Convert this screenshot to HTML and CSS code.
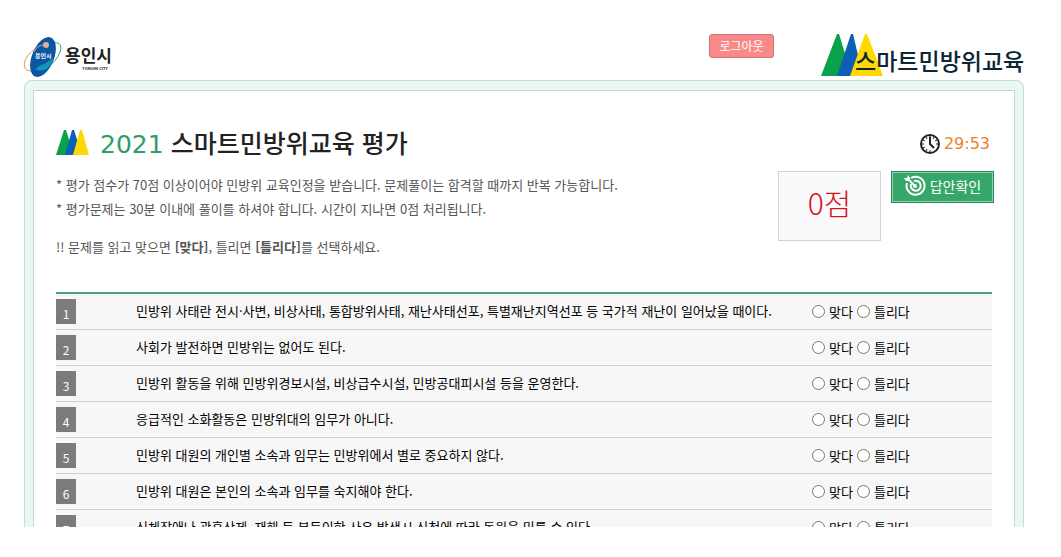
FILE: index.html
```html
<!DOCTYPE html>
<html lang="ko">
<head>
    <meta charset="UTF-8">
    <meta name="viewport" content="width=device-width, initial-scale=1.0">
    <title>스마트민방위교육 평가</title>
    <link rel="stylesheet" href="styles.css">
</head>
<body>
    <div class="container">
        <header class="top">
            <a href="#" class="city-logo">
                <svg width="92" height="44" viewBox="0 0 92 44">
                    <path d="M7 35C-3 35 -2 22 11 13" fill="none" stroke="#d39a45" stroke-width="1"/>
                    <path d="M27 8C42 2 39 20 24 31" fill="none" stroke="#2f9c94" stroke-width="1"/>
                    <ellipse cx="19" cy="21" rx="11" ry="21" transform="rotate(22 19 21)" fill="#0b56a3"/>
                    <path d="M11 33C19 27 24 27 29 22C27 33 19 37 11 33Z" fill="#1593b8"/>
                    <path d="M10 16C13 10 17 9 20 9" fill="none" stroke="#d9a58f" stroke-width="1"/>
                    <circle cx="22" cy="9" r="3" fill="#e9ab92"/>
                    <text x="11" y="22" class="city-mini">용인시</text>
                    <text x="41" y="26" class="city-name">용인시</text>
                    <text x="58" y="34" class="city-en">YONGIN CITY</text>
                </svg>
            </a>
            <button type="button" class="logout">로그아웃</button>
            <a href="#" class="edu-logo">
                <svg width="203" height="44" viewBox="0 0 203 44">
                    <path d="M16 0H18L31 42H0Z" fill="#0aa14b"/>
                    <path d="M30 0H32L42 42H16Z" fill="#0c5fb4"/>
                    <path d="M44 0H46L62 42H29Z" fill="#ffd800"/>
                    <text x="34" y="36" class="edu-name">스마트민방위교육</text>
                </svg>
            </a>
        </header>

        <main class="frame">
            <div class="panel">
                <div class="title-row">
                    <svg width="34" height="26" viewBox="0 0 34 26">
                        <path d="M8 0H10L18 25H0Z" fill="#0aa14b"/>
                        <path d="M16 0H18L26 25H9Z" fill="#0c5fb4"/>
                        <path d="M24 0H26L33 25H17Z" fill="#ffd800"/>
                    </svg>
                    <h1><span class="year">2021</span> 스마트민방위교육 평가</h1>
                    <div class="timer">
                        <svg width="22" height="22" viewBox="0 0 22 22" fill="none" stroke="#222">
                            <circle cx="12" cy="12" r="9" stroke-width="2"/>
                            <path d="M12 4V6M12 18V20M4 12H6M18 12H20M8 5L9 7M16 5L15 7M5 8L7 9M19 8L17 9M5 16L7 15M8 19L9 17" stroke-width="1"/>
                            <path d="M12 5V12L16 16" stroke-width="2"/>
                        </svg>
                        <span>29:53</span>
                    </div>
                </div>

                <div class="intro">
                    <div class="guide">
                        <p>* 평가 점수가 70점 이상이어야 민방위 교육인정을 받습니다. 문제풀이는 합격할 때까지 반복 가능합니다.</p>
                        <p>* 평가문제는 30분 이내에 풀이를 하셔야 합니다. 시간이 지나면 0점 처리됩니다.</p>
                        <p class="how">!! 문제를 읽고 맞으면 <b>[맞다]</b>, 틀리면 <b>[틀리다]</b>를 선택하세요.</p>
                    </div>
                    <div class="score">0점</div>
                    <button type="button" class="check">
                        <svg width="22" height="22" viewBox="0 0 22 22" fill="none" stroke="#fff">
                            <path d="M7 3A9 9 0 1 1 3 8" stroke-width="2"/>
                            <path d="M10 6A5 5 0 1 1 7 9" stroke-width="2"/>
                            <circle cx="11" cy="11" r="2" fill="#fff" stroke="none"/>
                            <path d="M3 3L11 11" stroke-width="2"/>
                            <path d="M0 3L3 3L4 0L6 3L6 6L2 6Z" fill="#fff" stroke="none"/>
                        </svg>
                        답안확인
                    </button>
                </div>

                <table class="quiz">
                    <tbody>
                        <tr>
                            <td class="no"><span>1</span></td>
                            <td class="question">민방위 사태란 전시·사변, 비상사태, 통합방위사태, 재난사태선포, 특별재난지역선포 등 국가적 재난이 일어났을 때이다.</td>
                            <td class="answer"><label><input type="radio" name="q1">맞다</label><label><input type="radio" name="q1">틀리다</label></td>
                        </tr>
                        <tr>
                            <td class="no"><span>2</span></td>
                            <td class="question">사회가 발전하면 민방위는 없어도 된다.</td>
                            <td class="answer"><label><input type="radio" name="q2">맞다</label><label><input type="radio" name="q2">틀리다</label></td>
                        </tr>
                        <tr>
                            <td class="no"><span>3</span></td>
                            <td class="question">민방위 활동을 위해 민방위경보시설, 비상급수시설, 민방공대피시설 등을 운영한다.</td>
                            <td class="answer"><label><input type="radio" name="q3">맞다</label><label><input type="radio" name="q3">틀리다</label></td>
                        </tr>
                        <tr>
                            <td class="no"><span>4</span></td>
                            <td class="question">응급적인 소화활동은 민방위대의 임무가 아니다.</td>
                            <td class="answer"><label><input type="radio" name="q4">맞다</label><label><input type="radio" name="q4">틀리다</label></td>
                        </tr>
                        <tr>
                            <td class="no"><span>5</span></td>
                            <td class="question">민방위 대원의 개인별 소속과 임무는 민방위에서 별로 중요하지 않다.</td>
                            <td class="answer"><label><input type="radio" name="q5">맞다</label><label><input type="radio" name="q5">틀리다</label></td>
                        </tr>
                        <tr>
                            <td class="no"><span>6</span></td>
                            <td class="question">민방위 대원은 본인의 소속과 임무를 숙지해야 한다.</td>
                            <td class="answer"><label><input type="radio" name="q6">맞다</label><label><input type="radio" name="q6">틀리다</label></td>
                        </tr>
                        <tr>
                            <td class="no"><span>7</span></td>
                            <td class="question">신체장애나 관혼상제, 재해 등 부득이한 사유 발생시 신청에 따라 동원을 미룰 수 있다.</td>
                            <td class="answer"><label><input type="radio" name="q7">맞다</label><label><input type="radio" name="q7">틀리다</label></td>
                        </tr>
                    </tbody>
                </table>
            </div>
        </main>
    </div>
</body>
</html>
```
FILE: styles.css
```css
* {
    box-sizing: border-box;
}
body {
    margin: 0;
    background-color: #fff;
    color: #000;
    font-family: "Noto Sans CJK KR", sans-serif;
    font-size: 13px;
}
button {
    font-family: inherit;
    cursor: pointer;
}
.container {
    display: flex;
    flex-direction: column;
    height: 100vh;
    padding: 32px 37px 30px 24px;
    overflow: hidden;
}
.top {
    display: flex;
    align-items: flex-start;
    flex: none;
    height: 48px;
}
.top svg {
    display: block;
    overflow: visible;
}
.city-logo {
    margin-top: 4px;
    margin-right: auto;
}
.city-mini {
    font-size: 6px;
    font-weight: bold;
    fill: #fff;
}
.city-name {
    font-size: 17px;
    font-weight: bold;
    fill: #222;
}
.city-en {
    font-family: "Liberation Sans", sans-serif;
    font-size: 4px;
    font-weight: bold;
    fill: #222;
}
.logout {
    width: 65px;
    height: 24px;
    margin: 2px 47px 0 0;
    padding: 0;
    border: 1px solid #cf7378;
    border-radius: 3px;
    background-color: #fa8a8a;
    color: #fff;
    font-size: 12px;
    line-height: 20px;
}
.edu-logo {
    margin-top: 2px;
}
.edu-name {
    font-size: 23px;
    font-weight: 500;
    fill: #0d2633;
}
.frame {
    flex: 1;
    min-height: 0;
    padding: 9px 8px 0;
    border: 1px solid #c6ddd6;
    border-bottom: 0;
    border-radius: 8px 8px 0 0;
    background-color: #eaf8f3;
    overflow: hidden;
}
.panel {
    min-height: 100%;
    padding: 36px 22px 0;
    border: 1px solid #c3d6d0;
    background-color: #fff;
}
.title-row {
    display: flex;
    align-items: center;
    height: 32px;
    margin-bottom: 12px;
}
h1 {
    margin: 0 auto 0 10px;
    color: #222;
    font-size: 25px;
    font-weight: 500;
    line-height: 30px;
}
.year {
    color: #2e9e68;
    font-family: "DejaVu Sans", sans-serif;
    font-weight: normal;
}
.timer {
    display: flex;
    align-items: center;
    gap: 4px;
    margin-right: 2px;
    color: #e9812c;
    font-family: "DejaVu Sans", sans-serif;
    font-size: 16px;
}
.intro {
    display: flex;
    align-items: flex-start;
    height: 121px;
}
.guide {
    flex: 1;
    padding-top: 2px;
    color: #555;
    line-height: 24px;
    white-space: nowrap;
}
.guide p {
    margin: 0;
}
.guide .how {
    margin-top: 14px;
}
.score {
    width: 103px;
    height: 70px;
    margin-right: 10px;
    border: 1px solid #d3d3d6;
    background-color: #fafafc;
    color: #d9131b;
    font-size: 30px;
    font-weight: 300;
    line-height: 60px;
    text-align: center;
}
.check {
    display: flex;
    align-items: center;
    justify-content: center;
    gap: 4px;
    width: 103px;
    height: 32px;
    margin-right: -2px;
    padding: 0 0 2px;
    border: 1px solid #2b8c5b;
    outline: 1px solid #8fd0ae;
    outline-offset: -2px;
    background-color: #35a869;
    color: #fff;
    font-size: 14px;
}
.quiz {
    width: 100%;
    border-collapse: separate;
    border-spacing: 0;
    border-top: 2px solid #4ba17c;
    background-color: #f7f7f7;
}
.quiz td {
    height: 36px;
    padding: 0;
    border-bottom: 1px solid #d0d0d0;
    line-height: 24px;
    white-space: nowrap;
}
.quiz .question {
    padding-bottom: 2px;
}
.no {
    width: 80px;
}
.no span {
    display: block;
    width: 20px;
    height: 25px;
    background-color: #7b7b7b;
    color: #fff;
    font-size: 12px;
    line-height: 30px;
    text-align: center;
}
.quiz .answer {
    width: 180px;
    padding-top: 2px;
}
.answer label {
    display: inline-flex;
    align-items: center;
    gap: 4px;
    margin-right: 4px;
}
.answer input {
    width: 13px;
    height: 13px;
    margin: 0;
}
```
